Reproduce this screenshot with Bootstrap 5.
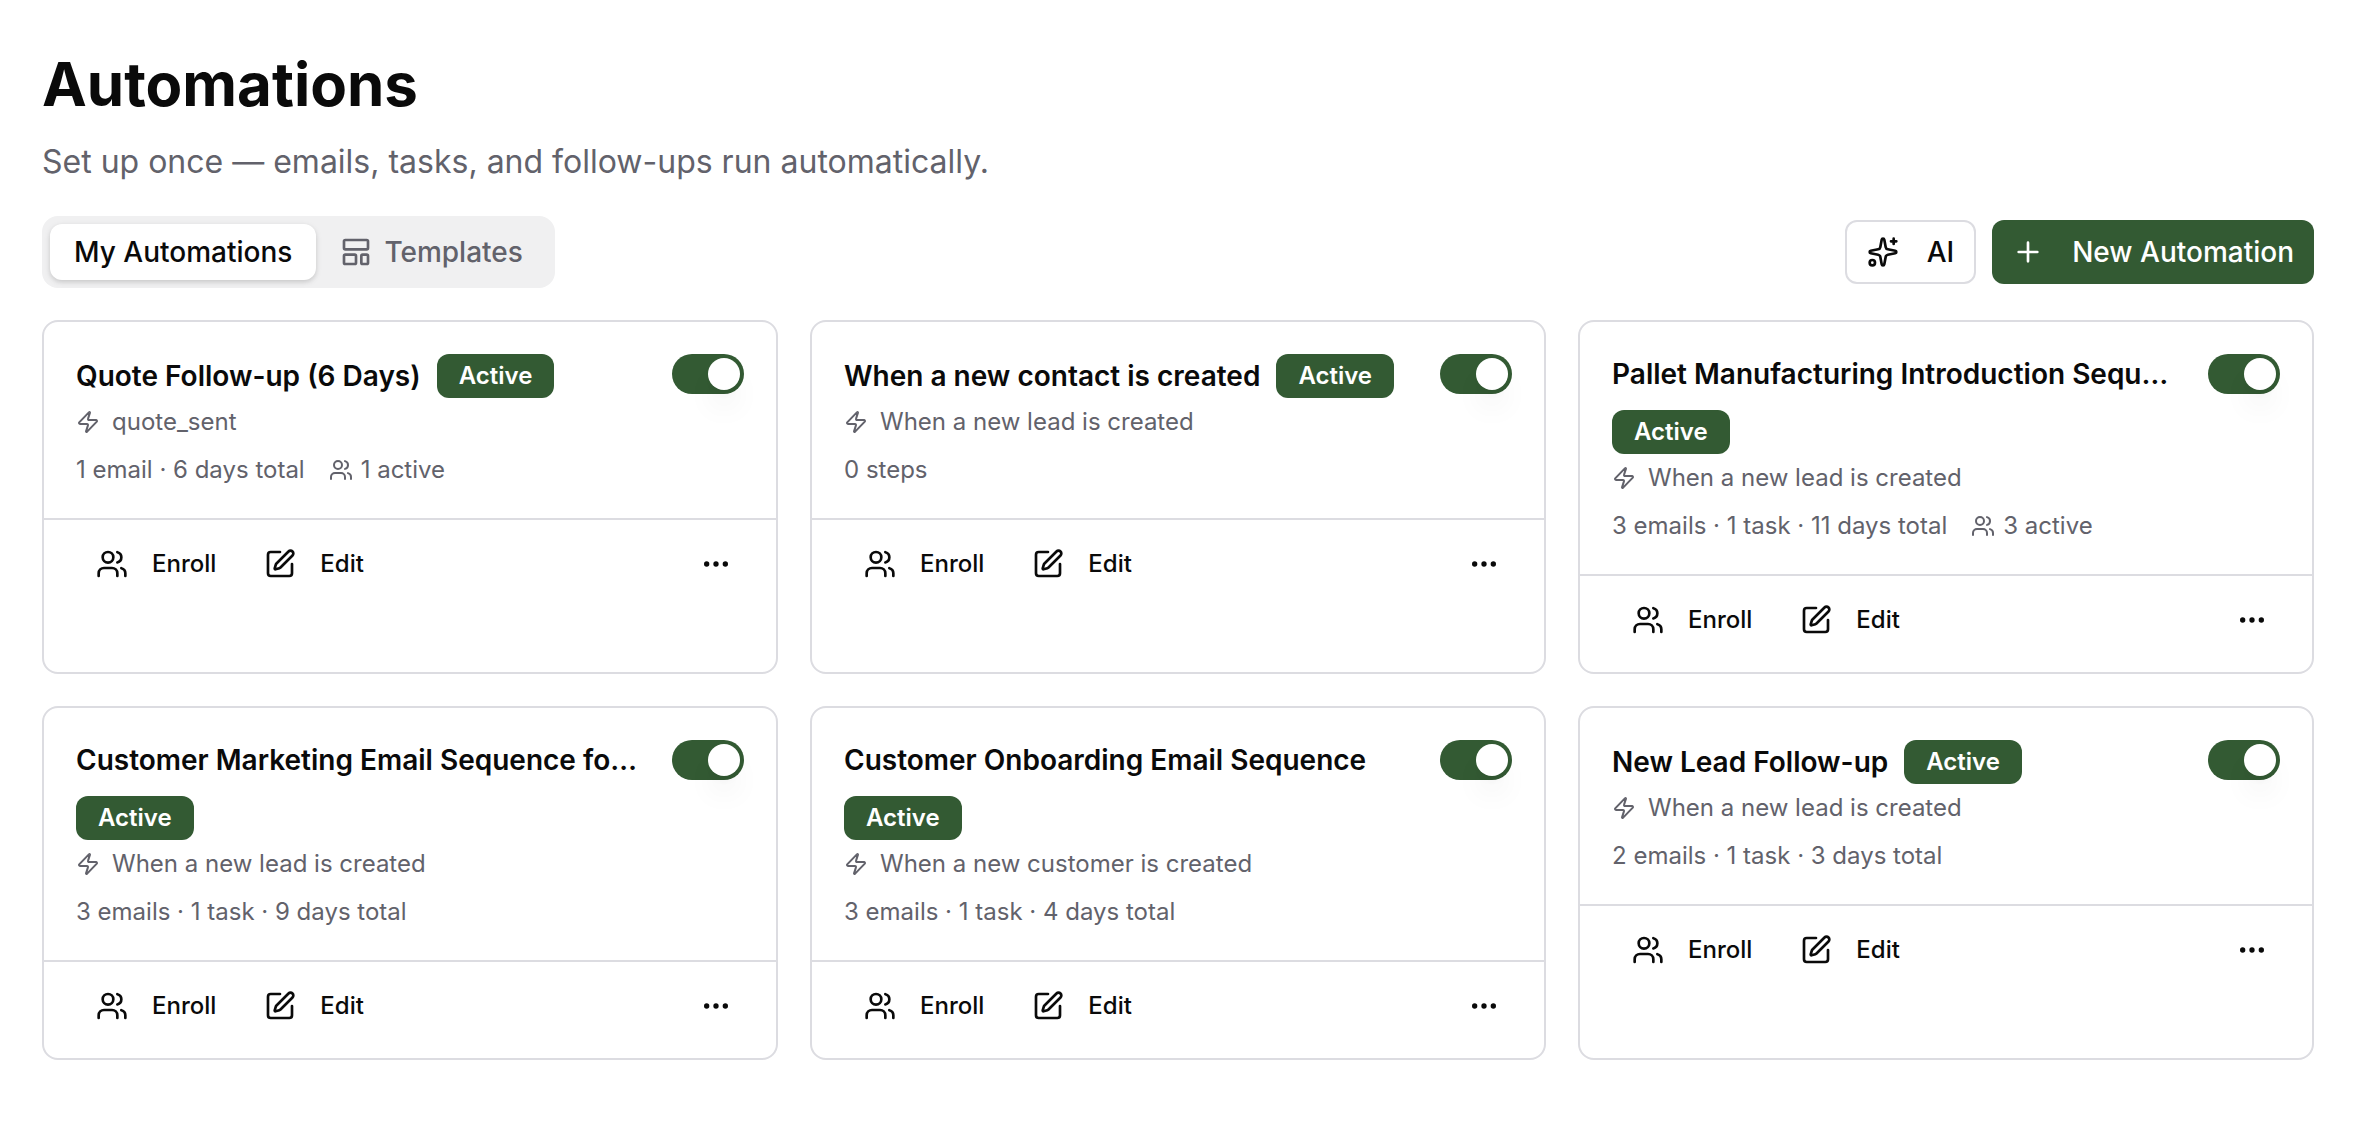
<!DOCTYPE html>
<html lang="en">
<head>
<meta charset="utf-8">
<meta name="viewport" content="width=device-width, initial-scale=1">
<title>Automations</title>
<link href="https://cdn.jsdelivr.net/npm/bootstrap@5.3.0/dist/css/bootstrap.min.css" rel="stylesheet">
<style>
  :root { --brand: #335a33; --ink: #0a0a0a; --muted-ink: #62626b; --line: #dcdce1; }
  body { font-family: Inter, "Liberation Sans", sans-serif; color: var(--ink); background: #fff; font-size: 24px; line-height: 32px; }
  .page { padding: 48px 48px 48px 42px; }
  .page-title { font-size: 60px; line-height: 72px; font-weight: 700; margin: 0 0 16px; }
  .page-sub { font-size: 32px; line-height: 52px; color: var(--muted-ink); margin: 0 0 28px; }
  .ico { width: 32px; height: 32px; flex: none; fill: none; stroke: currentColor; stroke-width: 2; stroke-linecap: round; stroke-linejoin: round; }
  .ico-sm { width: 24px; height: 24px; }
  .toolbar { margin-bottom: 32px; }
  .tabs { background: #f0f0f1; border-radius: 16px; padding: 8px; }
  .tabs .nav-link { display: flex; align-items: center; gap: 12px; height: 56px; padding: 0 24px; border: 0; border-radius: 12px; background: none; font-size: 28px; font-weight: 500; color: var(--muted-ink); }
  .tabs .nav-link.active { background: #fff; color: var(--ink); box-shadow: 0 2px 6px rgba(0,0,0,.1), 0 2px 4px rgba(0,0,0,.08); }
  .act { display: inline-flex; align-items: center; gap: 28px; height: 64px; padding: 0 20px; border: 2px solid var(--line); border-radius: 12px; font-size: 28px; font-weight: 500; color: var(--ink); background: #fff; }
  .act-main, .act-main:hover { background: var(--brand); border: 0; color: #fff; }
  .flows { --bs-gutter-x: 32px; --bs-gutter-y: 32px; }
  .flow { border: 2px solid var(--line); border-radius: 16px; color: var(--ink); }
  .flow .card-body { flex: none; padding: 32px; gap: 32px; }
  .flow-name { font-size: 28px; line-height: 40px; font-weight: 600; margin: 0; }
  .flow-head { gap: 16px; }
  .state { font-size: 24px; line-height: 32px; font-weight: 600; padding: 6px 22px; border-radius: 12px; background: var(--brand); color: #fff; }
  .trigger { gap: 12px; margin-top: 8px; color: var(--muted-ink); }
  .stats { gap: 24px; margin-top: 16px; color: var(--muted-ink); }
  .flow .card-footer { border-top: 2px solid var(--line); background: none; padding: 16px 32px 24px; gap: 8px; }
  .tool { display: inline-flex; align-items: center; gap: 24px; height: 56px; padding: 0 20px; border: 0; font-size: 24px; line-height: 32px; font-weight: 500; color: var(--ink); }
  .tool-more { padding: 0 12px; }
  .toggle.form-check-input { appearance: none; display: block; flex: none; width: 72px; height: 40px; margin: 0; padding: 4px; border: 0; border-radius: 20px; background: var(--line); }
  .toggle.form-check-input:checked { background: var(--brand); }
  .toggle::before { content: ""; display: block; width: 32px; height: 32px; border-radius: 50%; background: #fff; box-shadow: 0 20px 30px -6px rgba(0,0,0,.1), 0 8px 12px -8px rgba(0,0,0,.1); }
  .toggle:checked::before { margin-left: 32px; }
</style>
<script src="https://cdn.jsdelivr.net/npm/bootstrap@5.3.0/dist/js/bootstrap.bundle.min.js"></script>
</head>
<body>
<svg class="d-none" aria-hidden="true">
  <symbol id="i-zap" viewBox="0 0 24 24"><path d="M4 14a1 1 0 0 1-.78-1.63l9.9-10.2a.5.5 0 0 1 .86.46l-1.92 6.02A1 1 0 0 0 13 10h7a1 1 0 0 1 .78 1.63l-9.9 10.2a.5.5 0 0 1-.86-.46l1.92-6.02A1 1 0 0 0 11 14z"/></symbol>
  <symbol id="i-team" viewBox="0 0 24 24"><path d="M16 21v-2a4 4 0 0 0-4-4H6a4 4 0 0 0-4 4v2"/><circle cx="9" cy="7" r="4"/><path d="M22 21v-2a4 4 0 0 0-3-3.87"/><path d="M16 3.13a4 4 0 0 1 0 7.75"/></symbol>
  <symbol id="i-edit" viewBox="0 0 24 24"><path d="M12 3H5a2 2 0 0 0-2 2v14a2 2 0 0 0 2 2h14a2 2 0 0 0 2-2v-7"/><path d="M18.375 2.625a1 1 0 0 1 3 3l-9.013 9.014a2 2 0 0 1-.853.505l-2.873.84a.5.5 0 0 1-.62-.62l.84-2.873a2 2 0 0 1 .506-.852z"/></symbol>
  <symbol id="i-more" viewBox="0 0 24 24"><circle cx="12" cy="12" r="1"/><circle cx="19" cy="12" r="1"/><circle cx="5" cy="12" r="1"/></symbol>
  <symbol id="i-plus" viewBox="0 0 24 24"><path d="M5 12h14M12 5v14"/></symbol>
  <symbol id="i-layout" viewBox="0 0 24 24"><rect width="18" height="7" x="3" y="3" rx="1"/><rect width="9" height="7" x="3" y="14" rx="1"/><rect width="5" height="7" x="16" y="14" rx="1"/></symbol>
  <symbol id="i-spark" viewBox="0 0 24 24"><path d="M11.017 2.814a1 1 0 0 1 1.966 0l1.051 5.558a2 2 0 0 0 1.594 1.594l5.558 1.051a1 1 0 0 1 0 1.966l-5.558 1.051a2 2 0 0 0-1.594 1.594l-1.051 5.558a1 1 0 0 1-1.966 0l-1.051-5.558a2 2 0 0 0-1.594-1.594l-5.558-1.051a1 1 0 0 1 0-1.966l5.558-1.051a2 2 0 0 0 1.594-1.594z"/><path d="M20 2v4M22 4h-4"/><circle cx="4" cy="20" r="2"/></symbol>
</svg>

<main class="page container-fluid">
  <h1 class="page-title">Automations</h1>
  <p class="page-sub">Set up once — emails, tasks, and follow-ups run automatically.</p>

  <div class="toolbar d-flex flex-wrap align-items-center justify-content-between gap-3">
    <div class="tabs nav" role="tablist">
      <button class="nav-link active" type="button" role="tab" aria-selected="true">My Automations</button>
      <button class="nav-link" type="button" role="tab" aria-selected="false"><svg class="ico"><use href="#i-layout"/></svg>Templates</button>
    </div>
    <div class="d-flex gap-3">
      <button class="btn act" type="button"><svg class="ico"><use href="#i-spark"/></svg>AI</button>
      <button class="btn act act-main" type="button"><svg class="ico"><use href="#i-plus"/></svg>New Automation</button>
    </div>
  </div>

  <div class="flows row row-cols-1 row-cols-lg-2 row-cols-xxl-3">
    <div class="col">
      <article class="flow card h-100">
        <div class="card-body d-flex align-items-start">
          <div class="flex-grow-1 overflow-hidden">
            <div class="flow-head d-flex flex-wrap align-items-center"><h2 class="flow-name text-truncate" id="f1">Quote Follow-up (6 Days)</h2><span class="state">Active</span></div>
            <div class="trigger d-flex align-items-center"><svg class="ico ico-sm"><use href="#i-zap"/></svg><span>quote_sent</span></div>
            <div class="stats d-flex"><span>1 email · 6 days total</span><span class="d-flex align-items-center gap-2"><svg class="ico ico-sm"><use href="#i-team"/></svg>1 active</span></div>
          </div>
          <input class="toggle form-check-input" type="checkbox" role="switch" aria-labelledby="f1" checked>
        </div>
        <div class="card-footer d-flex">
          <button class="btn tool" type="button"><svg class="ico"><use href="#i-team"/></svg>Enroll</button>
          <button class="btn tool" type="button"><svg class="ico"><use href="#i-edit"/></svg>Edit</button>
          <button class="btn tool tool-more ms-auto" type="button" aria-label="More"><svg class="ico"><use href="#i-more"/></svg></button>
        </div>
      </article>
    </div>
    <div class="col">
      <article class="flow card h-100">
        <div class="card-body d-flex align-items-start">
          <div class="flex-grow-1 overflow-hidden">
            <div class="flow-head d-flex flex-wrap align-items-center"><h2 class="flow-name text-truncate" id="f2">When a new contact is created</h2><span class="state">Active</span></div>
            <div class="trigger d-flex align-items-center"><svg class="ico ico-sm"><use href="#i-zap"/></svg><span>When a new lead is created</span></div>
            <div class="stats d-flex"><span>0 steps</span></div>
          </div>
          <input class="toggle form-check-input" type="checkbox" role="switch" aria-labelledby="f2" checked>
        </div>
        <div class="card-footer d-flex">
          <button class="btn tool" type="button"><svg class="ico"><use href="#i-team"/></svg>Enroll</button>
          <button class="btn tool" type="button"><svg class="ico"><use href="#i-edit"/></svg>Edit</button>
          <button class="btn tool tool-more ms-auto" type="button" aria-label="More"><svg class="ico"><use href="#i-more"/></svg></button>
        </div>
      </article>
    </div>
    <div class="col">
      <article class="flow card h-100">
        <div class="card-body d-flex align-items-start">
          <div class="flex-grow-1 overflow-hidden">
            <div class="flow-head d-flex flex-wrap align-items-center"><h2 class="flow-name text-truncate" id="f3">Pallet Manufacturing Introduction Sequence</h2><span class="state">Active</span></div>
            <div class="trigger d-flex align-items-center"><svg class="ico ico-sm"><use href="#i-zap"/></svg><span>When a new lead is created</span></div>
            <div class="stats d-flex"><span>3 emails · 1 task · 11 days total</span><span class="d-flex align-items-center gap-2"><svg class="ico ico-sm"><use href="#i-team"/></svg>3 active</span></div>
          </div>
          <input class="toggle form-check-input" type="checkbox" role="switch" aria-labelledby="f3" checked>
        </div>
        <div class="card-footer d-flex">
          <button class="btn tool" type="button"><svg class="ico"><use href="#i-team"/></svg>Enroll</button>
          <button class="btn tool" type="button"><svg class="ico"><use href="#i-edit"/></svg>Edit</button>
          <button class="btn tool tool-more ms-auto" type="button" aria-label="More"><svg class="ico"><use href="#i-more"/></svg></button>
        </div>
      </article>
    </div>
    <div class="col">
      <article class="flow card h-100">
        <div class="card-body d-flex align-items-start">
          <div class="flex-grow-1 overflow-hidden">
            <div class="flow-head d-flex flex-wrap align-items-center"><h2 class="flow-name text-truncate" id="f4">Customer Marketing Email Sequence for Leads</h2><span class="state">Active</span></div>
            <div class="trigger d-flex align-items-center"><svg class="ico ico-sm"><use href="#i-zap"/></svg><span>When a new lead is created</span></div>
            <div class="stats d-flex"><span>3 emails · 1 task · 9 days total</span></div>
          </div>
          <input class="toggle form-check-input" type="checkbox" role="switch" aria-labelledby="f4" checked>
        </div>
        <div class="card-footer d-flex">
          <button class="btn tool" type="button"><svg class="ico"><use href="#i-team"/></svg>Enroll</button>
          <button class="btn tool" type="button"><svg class="ico"><use href="#i-edit"/></svg>Edit</button>
          <button class="btn tool tool-more ms-auto" type="button" aria-label="More"><svg class="ico"><use href="#i-more"/></svg></button>
        </div>
      </article>
    </div>
    <div class="col">
      <article class="flow card h-100">
        <div class="card-body d-flex align-items-start">
          <div class="flex-grow-1 overflow-hidden">
            <div class="flow-head d-flex flex-wrap align-items-center"><h2 class="flow-name text-truncate" id="f5">Customer Onboarding Email Sequence</h2><span class="state">Active</span></div>
            <div class="trigger d-flex align-items-center"><svg class="ico ico-sm"><use href="#i-zap"/></svg><span>When a new customer is created</span></div>
            <div class="stats d-flex"><span>3 emails · 1 task · 4 days total</span></div>
          </div>
          <input class="toggle form-check-input" type="checkbox" role="switch" aria-labelledby="f5" checked>
        </div>
        <div class="card-footer d-flex">
          <button class="btn tool" type="button"><svg class="ico"><use href="#i-team"/></svg>Enroll</button>
          <button class="btn tool" type="button"><svg class="ico"><use href="#i-edit"/></svg>Edit</button>
          <button class="btn tool tool-more ms-auto" type="button" aria-label="More"><svg class="ico"><use href="#i-more"/></svg></button>
        </div>
      </article>
    </div>
    <div class="col">
      <article class="flow card h-100">
        <div class="card-body d-flex align-items-start">
          <div class="flex-grow-1 overflow-hidden">
            <div class="flow-head d-flex flex-wrap align-items-center"><h2 class="flow-name text-truncate" id="f6">New Lead Follow-up</h2><span class="state">Active</span></div>
            <div class="trigger d-flex align-items-center"><svg class="ico ico-sm"><use href="#i-zap"/></svg><span>When a new lead is created</span></div>
            <div class="stats d-flex"><span>2 emails · 1 task · 3 days total</span></div>
          </div>
          <input class="toggle form-check-input" type="checkbox" role="switch" aria-labelledby="f6" checked>
        </div>
        <div class="card-footer d-flex">
          <button class="btn tool" type="button"><svg class="ico"><use href="#i-team"/></svg>Enroll</button>
          <button class="btn tool" type="button"><svg class="ico"><use href="#i-edit"/></svg>Edit</button>
          <button class="btn tool tool-more ms-auto" type="button" aria-label="More"><svg class="ico"><use href="#i-more"/></svg></button>
        </div>
      </article>
    </div>
  </div>
</main>
</body>
</html>
